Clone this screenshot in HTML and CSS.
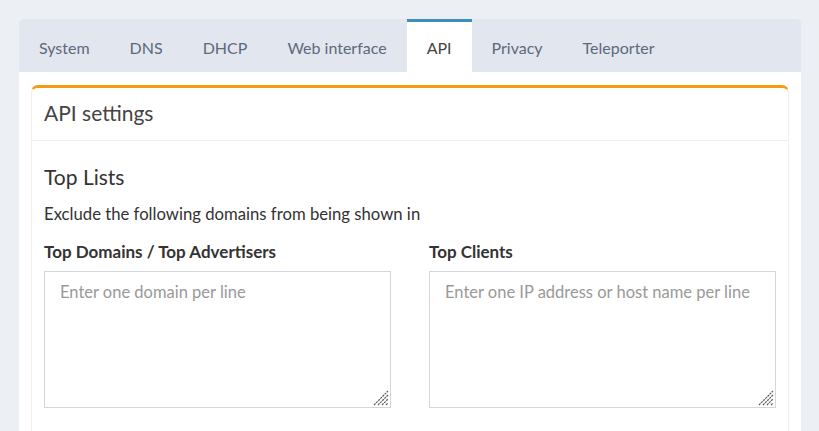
FILE: index.html
```html
<!DOCTYPE html>
<html>
<head>
<meta charset="utf-8">
<link rel="stylesheet" href="styles.css">
</head>
<body>
<div class="card">
  <ul class="tabs">
    <li class="tab">System</li>
    <li class="tab">DNS</li>
    <li class="tab">DHCP</li>
    <li class="tab">Web interface</li>
    <li class="tab active">API</li>
    <li class="tab">Privacy</li>
    <li class="tab">Teleporter</li>
  </ul>
  <div class="tab-content">
    <div class="box">
      <div class="box-header">API settings</div>
      <div class="box-body">
        <h4 class="section-title">Top Lists</h4>
        <p class="desc">Exclude the following domains from being shown in</p>
        <div class="cols">
          <div class="field">
            <label class="label">Top Domains / Top Advertisers</label>
            <div class="ta-wrap">
              <textarea class="ta" placeholder="Enter one domain per line"></textarea>
              <svg class="grip" width="16" height="16" viewBox="0 0 16 16"><path d="M1 15 L15 1 M5 15 L15 5 M9 15 L15 9 M13 15 L15 13" stroke="#5a5a5a" stroke-width="1.2" stroke-dasharray="2.2 0.8" fill="none"/></svg>
            </div>
          </div>
          <div class="field">
            <label class="label">Top Clients</label>
            <div class="ta-wrap">
              <textarea class="ta" placeholder="Enter one IP address or host name per line"></textarea>
              <svg class="grip" width="16" height="16" viewBox="0 0 16 16"><path d="M1 15 L15 1 M5 15 L15 5 M9 15 L15 9 M13 15 L15 13" stroke="#5a5a5a" stroke-width="1.2" stroke-dasharray="2.2 0.8" fill="none"/></svg>
            </div>
          </div>
        </div>
      </div>
    </div>
  </div>
</div>
</body>
</html>
```
FILE: styles.css
```css
html, body {
  margin: 0;
  padding: 0;
  background: #ecf0f5;
  font-family: "Lato", "Liberation Sans", sans-serif;
  color: #333;
}
.card {
  margin: 19px 18px 0 19px;
  background: #fff;
  border-radius: 4px 4px 0 0;
  height: 420px;
  overflow: hidden;
}
.tabs {
  list-style: none;
  margin: 0;
  padding: 0;
  display: flex;
  background: #e2e6ee;
  height: 53px;
}
.tab {
  padding: 0 20px;
  font-size: 16px;
  color: #5b6a7d;
  border-top: 3px solid transparent;
  line-height: 52px;
}
.tab.active {
  background: #fff;
  color: #444;
  border-top-color: #3c8dbc;
}
.tab-content {
  padding: 13px 12px 0 12px;
}
.box {
  border-top: 3px solid #f39c12;
  border-left: 1px solid #f0f0f0;
  border-right: 1px solid #f0f0f0;
  border-radius: 7px 7px 0 0;
  height: 400px;
}
.box-header {
  font-size: 21px;
  color: #444;
  padding: 0 12px;
  height: 52px;
  line-height: 50px;
  border-bottom: 1px solid #f0f0f0;
}
.box-body {
  padding: 0 12px;
}
.section-title {
  margin: 21px 0 0 0;
  font-size: 21px;
  font-weight: normal;
  line-height: 30px;
  color: #333;
}
.desc {
  margin: 10px 0 0 0;
  font-size: 16.7px;
  line-height: 24px;
}
.cols {
  display: grid;
  grid-template-columns: 1fr 1fr;
  column-gap: 38px;
  margin-top: 15px;
}
.label {
  display: block;
  font-weight: bold;
  font-size: 17px;
  line-height: 22px;
  margin-bottom: 8px;
}
.ta-wrap {
  position: relative;
}
.ta {
  display: block;
  box-sizing: border-box;
  width: 100%;
  height: 137px;
  border: 1px solid #d2d6de;
  padding: 8px 15px;
  font-family: inherit;
  font-size: 16.5px;
  line-height: 24px;
  resize: none;
  margin: 0;
  outline: none;
}
.ta::placeholder {
  color: #999;
}
.grip {
  position: absolute;
  right: 2px;
  bottom: 2px;
}
```
